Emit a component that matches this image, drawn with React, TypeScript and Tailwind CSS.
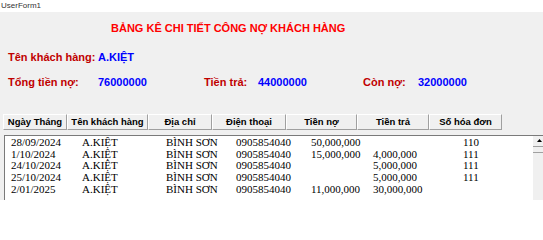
import React from "react";

const headers = [
  { label: "Ngày Tháng", w: "w-[64px]" },
  { label: "Tên khách hàng", w: "w-[81px]" },
  { label: "Địa chỉ", w: "w-[64px]" },
  { label: "Điện thoại", w: "w-[74px]" },
  { label: "Tiền nợ", w: "w-[71px]" },
  { label: "Tiền trả", w: "w-[72px]" },
  { label: "Số hóa đơn", w: "w-[73px]" },
];

const rows = [
  ["28/09/2024", "A.KIỆT", "BÌNH SƠN", "0905854040", "50,000,000", "", "110"],
  ["1/10/2024", "A.KIỆT", "BÌNH SƠN", "0905854040", "15,000,000", "4,000,000", "111"],
  ["24/10/2024", "A.KIỆT", "BÌNH SƠN", "0905854040", "", "5,000,000", "111"],
  ["25/10/2024", "A.KIỆT", "BÌNH SƠN", "0905854040", "", "5,000,000", "111"],
  ["2/01/2025", "A.KIỆT", "BÌNH SƠN", "0905854040", "11,000,000", "30,000,000", ""],
];

const colW = ["w-[71px]", "w-[84px]", "w-[70px]", "w-[75px]", "w-[62px]", "w-[90px]", "w-[60px]"];

export default function App() {
  const sans = { fontFamily: "'Liberation Sans', Arial, sans-serif" };
  return (
    <div className="w-[543px] h-[200px] overflow-hidden flex flex-col bg-white" style={sans}>
      <div className="h-[12px] shrink-0 bg-white text-[8px] leading-[12px] text-[#333] pl-[1px]">UserForm1</div>
      <div className="h-[240px] shrink-0 bg-[#f0f0f0] flex flex-col">
        <div className="mt-[9px] pl-[111px] h-[14px] text-[11px] leading-[14px] font-bold text-[#ff0000] whitespace-nowrap">
          BẢNG KÊ CHI TIẾT CÔNG NỢ KHÁCH HÀNG
        </div>
        <div className="mt-[15px] h-[14px] flex items-center text-[11px] leading-[14px] font-bold whitespace-nowrap">
          <span className="pl-[8px] w-[98px] text-[#c00000]">Tên khách hàng:</span>
          <span className="text-[#0000ff]">A.KIỆT</span>
        </div>
        <div className="mt-[11px] h-[14px] flex items-center text-[11px] leading-[14px] font-bold whitespace-nowrap">
          <span className="pl-[8px] w-[98px] text-[#c00000]">Tổng tiền nợ:</span>
          <span className="w-[106px] text-[#0000ff]">76000000</span>
          <span className="w-[54px] text-[#c00000]">Tiền trả:</span>
          <span className="w-[105px] text-[#0000ff]">44000000</span>
          <span className="w-[55px] text-[#c00000]">Còn nợ:</span>
          <span className="text-[#0000ff]">32000000</span>
        </div>
        <div className="mt-[25px] ml-[3px] flex h-[16px]">
          {headers.map((h) => (
            <div
              key={h.label}
              className={`${h.w} h-[16px] shrink-0 flex items-center justify-center text-[9.5px] font-bold text-black bg-[#f0f0f0] border-t border-l border-t-white border-l-white border-r border-b border-r-[#a0a0a0] border-b-[#a0a0a0] whitespace-nowrap`}
            >
              {h.label}
            </div>
          ))}
        </div>
        <div className="mt-[5px] ml-[4px] w-[560px] h-[100px] bg-white border border-[#7a7a7a] flex">
          <div className="flex-1 pt-[1px] pl-[6px]" style={{ fontFamily: "'Liberation Serif', 'Times New Roman', serif" }}>
            {rows.map((r, i) => (
              <div key={i} className="flex h-[11.7px] text-[11px] leading-[11.7px] text-black whitespace-nowrap">
                {r.map((c, j) => (
                  <span key={j} className={`${colW[j]} shrink-0`}>
                    {c}
                  </span>
                ))}
              </div>
            ))}
          </div>
          <div className="w-[17px] shrink-0 mr-[13px] bg-[#f0f0f0] flex flex-col">
            <div className="h-[10px] mt-[1px] flex items-start justify-center pt-[2px] pr-[4px] border-b border-[#a0a0a0]">
              <svg width="5" height="3" viewBox="0 0 5 3">
                <polygon points="2.5,0 5,3 0,3" fill="#000" />
              </svg>
            </div>
            <div className="h-[6px] border-b border-[#a0a0a0] bg-[#f0f0f0]" />
          </div>
        </div>
      </div>
    </div>
  );
}
